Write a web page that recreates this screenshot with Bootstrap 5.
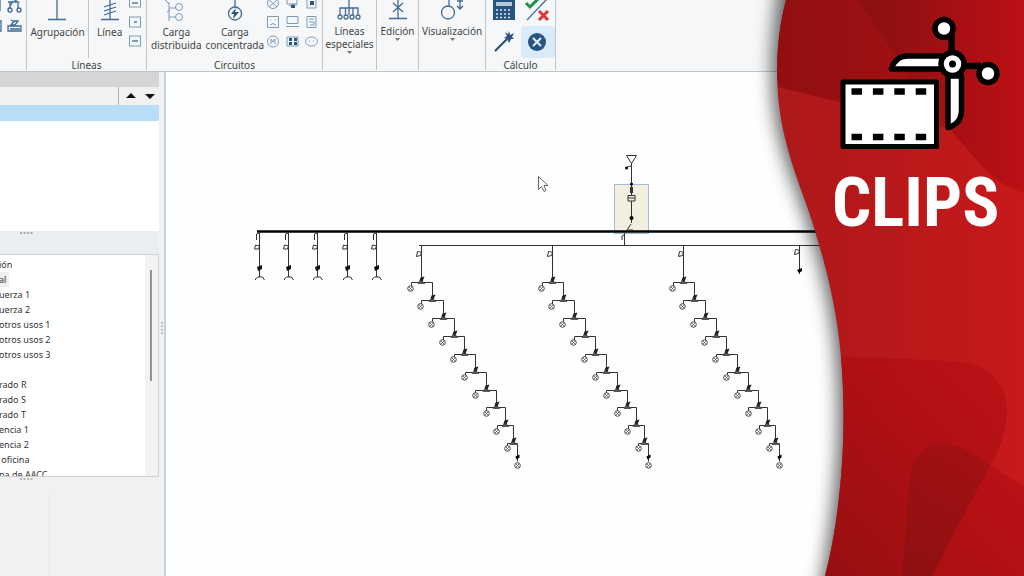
<!DOCTYPE html>
<html lang="es">
<head>
<meta charset="utf-8">
<meta name="viewport" content="width=device-width, initial-scale=1">
<title>Clips</title>
<link href="https://cdn.jsdelivr.net/npm/bootstrap@5.3.0/dist/css/bootstrap.min.css" rel="stylesheet">
<style>
body{font-family:"Noto Sans","Open Sans",sans-serif;font-size:10px;line-height:13px;color:#444;background:#f1f1f1}
button{font:inherit;color:inherit;border:0;background:none;padding:0}
svg{display:block}
.ribbon{height:72px;background:#f5f7f8;border-bottom:1px solid #b4cadb}
.tool-group{border-right:1px solid #c3c5c6;height:70px}
.tool-body{flex:0 0 58px}
.tool-caption{line-height:14px}
.w-a{flex:0 0 27px}.w-b{flex:0 0 120px}.w-c{flex:0 0 176px}.w-d{flex:0 0 54px}
.w-e{flex:0 0 42px}.w-f{flex:0 0 67px}.w-g{flex:0 0 70px}
.tool-split{flex:0 0 62px;border-right:1px solid #c3c5c6}
.tool{display:flex;flex-direction:column;align-items:center;white-space:nowrap}
.tool svg{margin-bottom:4px}
.ico{fill:none;stroke:#426b97;stroke-width:1.3}
.thin{stroke:#7c9bbb;stroke-width:1}
.solid{fill:#285480;stroke:none}
.picked{background:#d9ebf8;border-radius:4px}
.side{flex:0 0 159px;color:#333}
.side-title{height:15px;background:#d5d5d5}
.side-filter{height:18px}
.side-filter input{width:119px;border:0;border-right:1px solid #b5b5b5;background:#f2f2f2;border-radius:0}
.side-row{height:16px;background:#b8ddf8}
.side-blank{height:110px;background:#fff}
.side-split{height:23px;background:#eaeef1}
.side-list{height:223px;background:#fff;border:1px solid #d2d2d2;border-left:0;font-size:9px}
.side-list li{line-height:15px;margin-left:-1px;white-space:nowrap}
.side-list ul{padding-top:2px}
.side-list .current{width:10px;background:#efefef}
.side-track{flex:0 0 13px;background:#f2f2f2;padding:15px 0 0 5px}
.side-thumb{width:2px;height:111px;background:#929292}
.side-foot{margin:11px 0 0 48px;border-left:2px solid #eeebeb}
.gutter{flex:0 0 7px;border-right:2px solid #bdd1df;padding-top:250px}
.canvas{background:#fefefe}
.sheet{width:100%;height:100%}
.wire{fill:none;stroke:#333;stroke-width:1}
.banner{width:320px}
.banner-text{width:172px;margin-right:20px}
.clips-title{font-family:"Roboto Condensed","Liberation Sans Narrow",Roboto,sans-serif;font-weight:700;font-size:69px;line-height:70px}
</style>
</head>
<body class="vh-100 d-flex flex-column overflow-hidden position-relative">
<header class="ribbon d-flex flex-shrink-0">
  <section class="tool-group w-a d-flex flex-column">
    <button aria-label="Esquema"><svg class="ico" width="24" height="34"><path d="M0 0v11M8 2h10l-5-3M10 8v-6M18 8v-5M8 10l5-9"/><circle cx="10" cy="10" r="2"/><circle cx="19" cy="10" r="2"/><path d="M0 21h1v10H0M8 26h13v5H8zM10 29h10M11 25l3-4h4l-3 4zM11 20l4 2" /></svg></button>
  </section>
  <section class="tool-group w-b d-flex flex-column">
    <div class="tool-body d-flex">
      <div class="tool-split d-flex justify-content-center"><button class="tool"><svg class="ico" width="20" height="22"><path d="M10 0v19M1 19.500h18"/></svg>Agrupación</button></div>
      <div class="d-flex justify-content-between flex-fill ps-2 pe-1">
        <button class="tool"><svg class="ico" width="20" height="22"><path d="M10 0v19M1 19.500h18M4 7l12-4M4 11l12-4M4 15l12-4"/></svg>Línea</button>
        <button class="align-self-start" aria-label="Tipos de línea"><svg class="ico thin" width="14" height="50"><rect x="1.500" y="-2" width="11" height="9"/><rect x="1.500" y="17" width="11" height="10"/><rect x="1.500" y="36" width="11" height="10"/><path stroke-width="2" d="M4 3h6M6 22h3M4 41h6"/></svg></button>
      </div>
    </div>
    <div class="tool-caption text-center">Líneas</div>
  </section>
  <section class="tool-group w-c d-flex flex-column">
    <div class="tool-body d-flex">
      <button class="tool ps-1"><svg class="ico thin" width="22" height="22"><path d="M4 2v19M4 8h7M4 17h7M0 0l4 4M2 12l3-2"/><circle cx="14" cy="7" r="3.500"/><circle cx="14" cy="17" r="3.500"/></svg>Carga<br>distribuida</button>
      <button class="tool ps-1"><svg class="ico" width="20" height="22"><path d="M10 0v7"/><circle cx="10" cy="13.500" r="6.500"/><path class="solid" d="M11 8l-5 6h3l-1 5 6-7h-4z"/></svg>Carga<br>concentrada</button>
      <button aria-label="Receptores" class="align-self-start"><svg class="ico thin" width="56" height="50"><circle cx="9" cy="3" r="5.500"/><path d="M5 0l8 7M13 0L5 7M23 0v4h10V0M25 6l4-2 4 1M43 -1h9v9h-9z"/><path class="solid" d="M46 1h4v4h-4zM27 5h4v3h-4z"/><path d="M3.500 16.500h11v11h-11zM6 20h1M11 20h1M6 25q3-3 6 0M23 16.500h11v7H23zM22 26.500h13M43 16.500h9v11h-9zM45 19h5M45 22h5v3h-4"/><circle cx="9" cy="41.500" r="5.500"/><path d="M7 44v-5l2 3 2-3v5"/><path d="M23 37h11v9H23z"/><path class="solid" d="M25 38h3v3h-3zM30 38h3v3h-3zM25 42h3v3h-3zM30 42h3v3h-3z"/><ellipse cx="47.500" cy="41.500" rx="6" ry="4.500"/><path d="M45 41h1M49 41h1"/></svg></button>
    </div>
    <div class="tool-caption text-center">Circuitos</div>
  </section>
  <section class="tool-group w-d d-flex justify-content-center"><button class="tool"><svg class="ico" width="24" height="21"><path d="M12 0v15M3 15V8h18v7M8.500 8v7M16 8v7"/><circle cx="3" cy="17" r="2"/><circle cx="9" cy="17" r="2"/><circle cx="15" cy="17" r="2"/><circle cx="21" cy="17" r="2"/></svg>Líneas<br>especiales<svg width="5" height="3"><path fill="#777" d="M0 0h5L2.500 3z"/></svg></button></section>
  <section class="tool-group w-e d-flex justify-content-center"><button class="tool"><svg class="ico" width="20" height="21"><path d="M10 0v18M1 18.500h18M5 3l10 9M15 3L5 12"/></svg>Edición<svg width="5" height="3"><path fill="#777" d="M0 0h5L2.500 3z"/></svg></button></section>
  <section class="tool-group w-f d-flex justify-content-center"><button class="tool"><svg class="ico" width="26" height="21"><path d="M10 0v6M21 0v9M18 6l3 3 3-3M18 1h6"/><circle cx="9" cy="12.500" r="6.500"/></svg>Visualización<svg width="5" height="3"><path fill="#777" d="M0 0h5L2.500 3z"/></svg></button></section>
  <section class="tool-group w-g d-flex flex-column">
    <div class="tool-body row row-cols-2 g-0 align-content-start">
      <button class="col" aria-label="Calcular"><svg width="34" height="26"><path class="solid" d="M7 0h22v20H7z"/><path stroke="#dce7f0" stroke-width="1.500" stroke-dasharray="2 2" d="M10 10h16M10 14h16M10 17.500h16"/><path fill="#b4c9da" d="M10 2h16v4H10z"/></svg></button>
      <button class="col" aria-label="Comprobar"><svg width="34" height="26" fill="none"><path stroke="#16924b" stroke-width="3" d="M5 3l4 4 8-8"/><path stroke="#547b9c" stroke-width="1.500" d="M6 20L26-1"/><path stroke="#e23337" stroke-width="3" d="M18 11l9 9M27 11l-9 9"/></svg></button>
      <button class="col" aria-label="Asistente"><svg width="34" height="32"><path stroke="#274b70" stroke-width="2" d="M9 25l12-12"/><path class="solid" d="M23 5l1 4 4-2-2 4 2 2-3 0-2 4-2-4-3-1 3-2-2-4 3 2z"/></svg></button>
      <button class="col picked" aria-label="Cerrar cálculo"><svg width="34" height="32"><circle class="solid" cx="16" cy="16" r="9"/><path stroke="#e5f3fc" stroke-width="2" d="M12 12l8 8M20 12l-8 8"/></svg></button>
    </div>
    <div class="tool-caption text-center">Cálculo</div>
  </section>
</header>

<main class="d-flex flex-fill overflow-hidden">
  <aside class="side d-flex flex-column">
    <div class="side-title"></div>
    <div class="side-filter d-flex">
      <input type="text" aria-label="Filtro">
      <button class="flex-fill" aria-label="Subir o bajar"><svg width="38" height="18"><path d="M7 11l5-5 5 5zM26 7h10l-5 5z" fill="#111"/></svg></button>
    </div>
    <div class="side-row"></div>
    <div class="side-blank"></div>
    <div class="side-split"><svg width="60" height="4"><path stroke="#aaa" stroke-width="2" stroke-dasharray="2 1.500" d="M20 2h13"/></svg></div>
    <div class="side-list d-flex overflow-hidden">
      <ul class="list-unstyled mb-0 flex-fill">
        <li>ión</li><li class="current">al</li><li>uerza 1</li><li>uerza 2</li><li>otros usos 1</li><li>otros usos 2</li><li>otros usos 3</li><li>&nbsp;</li><li>rado R</li><li>rado S</li><li>rado T</li><li>encia 1</li><li>encia 2</li><li>&nbsp;oficina</li><li>na de AACC</li>
      </ul>
      <div class="side-track"><div class="side-thumb"></div></div>
    </div>
    <svg width="60" height="5" class="flex-shrink-0"><path stroke="#b5b5b5" stroke-width="2" stroke-dasharray="2 1.500" d="M20 2h13"/></svg>
    <div class="side-foot flex-fill"></div>
  </aside>
  <div class="gutter"><svg width="5" height="14"><path stroke="#999" stroke-width="1.500" stroke-dasharray="1.500 2" d="M3 0v13"/></svg></div>
  <div class="canvas flex-fill overflow-hidden">
    <svg class="sheet" viewBox="166 72 858 504" preserveAspectRatio="xMinYMin slice" role="img" aria-label="Esquema unifilar">
      <defs>
        <g id="knot"><path d="M-4 .500L-2-3H1L4 .500z" fill="#555"/><path d="M-2-3L-1-6l4-1-2 5z" fill="#222"/></g>
        <g id="lamp"><circle r="2.800" fill="#fff" stroke="#444"/><path d="M-2-2l4 4M2-2l-4 4" stroke="#555" stroke-width=".8"/></g>
        <g id="breaker"><path class="wire" d="M0 0v8M-3 4h-1l-1 5 4-1 1-3z"/></g>
        <g id="outlet"><path class="wire" d="M0 0v45M-3 8v-6l3-1M0 14l-4-1-1 4 4 0 1-3M-4 48v-1l2-2h5l2 3"/><path d="M-2.500 35l5-2v4l-4 2z" fill="#111"/></g>
        <g id="chain">
          <path class="wire" d="M0 0v37M-10 41v-4H11v18M0 59v-4H22v18M11 77v-4H33v18M22 95v-4H43v18M33 113v-4H54v18M44 131v-4H65v18M54 149v-4H75v17M65 166v-4H84v18M76 184v-4H92v18M86 202v-4H96v18"/>
          <use href="#breaker" y="2"/>
          <use href="#knot" x="0" y="38"/><use href="#knot" x="11" y="56"/><use href="#knot" x="22" y="74"/><use href="#knot" x="33" y="92"/><use href="#knot" x="43" y="110"/><use href="#knot" x="54" y="128"/><use href="#knot" x="65" y="146"/><use href="#knot" x="75" y="163"/><use href="#knot" x="84" y="181"/><use href="#knot" x="92" y="199"/>
          <path d="M94 211l4-2v3l-3 2z"/>
          <use href="#lamp" x="-11" y="43"/><use href="#lamp" x="-1" y="61"/><use href="#lamp" x="10" y="79"/><use href="#lamp" x="21" y="97"/><use href="#lamp" x="32" y="114"/><use href="#lamp" x="43" y="132"/><use href="#lamp" x="54" y="150"/><use href="#lamp" x="65" y="168"/><use href="#lamp" x="75" y="186"/><use href="#lamp" x="86" y="203"/><use href="#lamp" x="96" y="220"/>
        </g>
      </defs>
      <rect x="614.500" y="184.500" width="34" height="49" fill="#f3efdf" stroke="#9fbedb"/>
      <path d="M257 231.500h650" stroke="#000" stroke-width="2.500"/>
      <path class="wire" d="M419 245.500h500M624.500 232v13M622 240v-4l2-1"/>
      <path class="wire" d="M626.500 155.500h10l-5 8zM631.500 163v33M631.500 201v22M631 166l-4 1M628 195.500h7v5.500h-7zM628 198h7M631 224l-4 6h6"/>
      <circle cx="626.500" cy="168" r="1.500"/><circle cx="631.500" cy="184" r="1.500"/><path d="M630 187h3v6h-3z" fill="#333"/><circle cx="631.500" cy="218" r="2"/>
      <use href="#outlet" x="259.500" y="232"/><use href="#outlet" x="288.500" y="232"/><use href="#outlet" x="317.500" y="232"/><use href="#outlet" x="347.500" y="232"/><use href="#outlet" x="376.500" y="232"/>
      <use href="#chain" x="421.500" y="245.500"/><use href="#chain" x="552.500" y="245.500"/><use href="#chain" x="683.500" y="245.500"/>
      <path class="wire" d="M799.500 245v29"/><use href="#breaker" x="799.500" y="245.500"/><path d="M797 270l5-2v3l-3 2z"/>
      <path d="M538.500 176.500v13l3-3 2.500 5 2-1-2-5h4z" fill="#fff" stroke="#666"/>
    </svg>
  </div>
</main>

<aside class="banner position-absolute top-0 end-0 h-100">
  <svg class="position-absolute top-0 end-0 w-100 h-100" viewBox="704 0 320 576" preserveAspectRatio="xMaxYMin slice" aria-hidden="true">
    <defs>
      <clipPath id="wave"><path id="edge" d="M786 0C775 40 774 90 784 134C793 174 808 204 817 238C836 300 843 350 843.500 410C844 470 837 530 825 576H1060V0z"/></clipPath>
      <filter id="blur" x="-40%" y="-20%" width="180%" height="140%"><feGaussianBlur stdDeviation="9"/></filter>
      <linearGradient id="base"><stop offset="0" stop-color="#ac1819"/><stop offset=".5" stop-color="#b9191a"/><stop offset="1" stop-color="#c8191c"/></linearGradient>
      <linearGradient id="topA"><stop offset="0" stop-color="#900f10"/><stop offset="1" stop-color="#a61114"/></linearGradient>
      <linearGradient id="topB"><stop offset="0" stop-color="#8c1011"/><stop offset=".2" stop-color="#901012"/><stop offset=".75" stop-color="#b01014"/><stop offset="1" stop-color="#bd1014"/></linearGradient>
      <linearGradient id="low" x1="0" y1="1" x2="1" y2="0"><stop offset="0" stop-color="#950f11"/><stop offset=".6" stop-color="#b01013"/><stop offset="1" stop-color="#bc1216"/></linearGradient>
      <linearGradient id="fold" x1="0" y1="1" x2="1" y2="0"><stop offset="0" stop-color="#a91012"/><stop offset="1" stop-color="#bd1116"/></linearGradient>
      <linearGradient id="deep" x1="0" y1="1" x2=".6" y2="0"><stop offset="0" stop-color="#8e1012"/><stop offset="1" stop-color="#a41012"/></linearGradient>
      <clipPath id="lobe"><path id="lobeShape" d="M830 356L955 361C992 362 1008 388 1007 411C1006 440 995 458 985 475L932 576H815z"/></clipPath>
    </defs>
    <path filter="url(#blur)" transform="translate(-5 0)" opacity=".62" d="M788-40C775 40 774 90 784 134C793 174 808 204 817 238C836 300 843 350 843.500 410C844 470 837 530 820 620H1060V-40z"/>
    <g clip-path="url(#wave)">
      <path fill="url(#base)" d="M770 0h260v576H770z"/>
      <path fill="url(#topA)" d="M770 0h90l90 129-172-42z"/>
      <path fill="url(#topB)" d="M858 0l52 78 30 39C960 142 978 162 993 177Q1010 190 1030 195V0z"/>
      <use href="#lobeShape" fill="url(#low)"/>
      <path fill="url(#fold)" d="M902 576L909 482C912 458 925 442 945 444C963 445 973 454 990 465L1030 491V576z"/>
      <g clip-path="url(#lobe)"><path fill="url(#deep)" d="M902 576L909 482C912 458 925 442 945 444C963 445 973 454 990 465L1030 491V576z"/></g>
    </g>
  </svg>
  <div class="banner-text position-relative ms-auto pt-3">
    <svg width="172" height="136" viewBox="832 16 172 136" aria-hidden="true">
      <path fill="#fff" stroke="#000" stroke-width="5" stroke-linejoin="round" d="M843 82h93.500v64.500H843z"/>
      <path stroke="#000" stroke-width="6.500" stroke-dasharray="10.500 10.900" d="M851.500 91.500h76M851.500 137h76"/>
      <g fill="#fff" stroke="#000" stroke-width="5.500" stroke-linejoin="round">
        <path d="M891.500 69c2-8 8-13 16-13h38v13zM948 76h13.500v34c0 9-4 15-13.500 17.500z"/>
        <path stroke-width="6.500" d="M951.500 55V33M963 66h18"/>
        <circle cx="944" cy="28.500" r="9"/><circle cx="988" cy="73.500" r="9"/>
        <circle cx="952.500" cy="64" r="11.500"/>
      </g>
      <circle cx="952.500" cy="64" r="3.500"/>
    </svg>
    <h1 class="clips-title text-white mb-0 pt-3">CLIPS</h1>
  </div>
</aside>
<script src="https://cdn.jsdelivr.net/npm/bootstrap@5.3.0/dist/js/bootstrap.bundle.min.js"></script>
</body>
</html>
